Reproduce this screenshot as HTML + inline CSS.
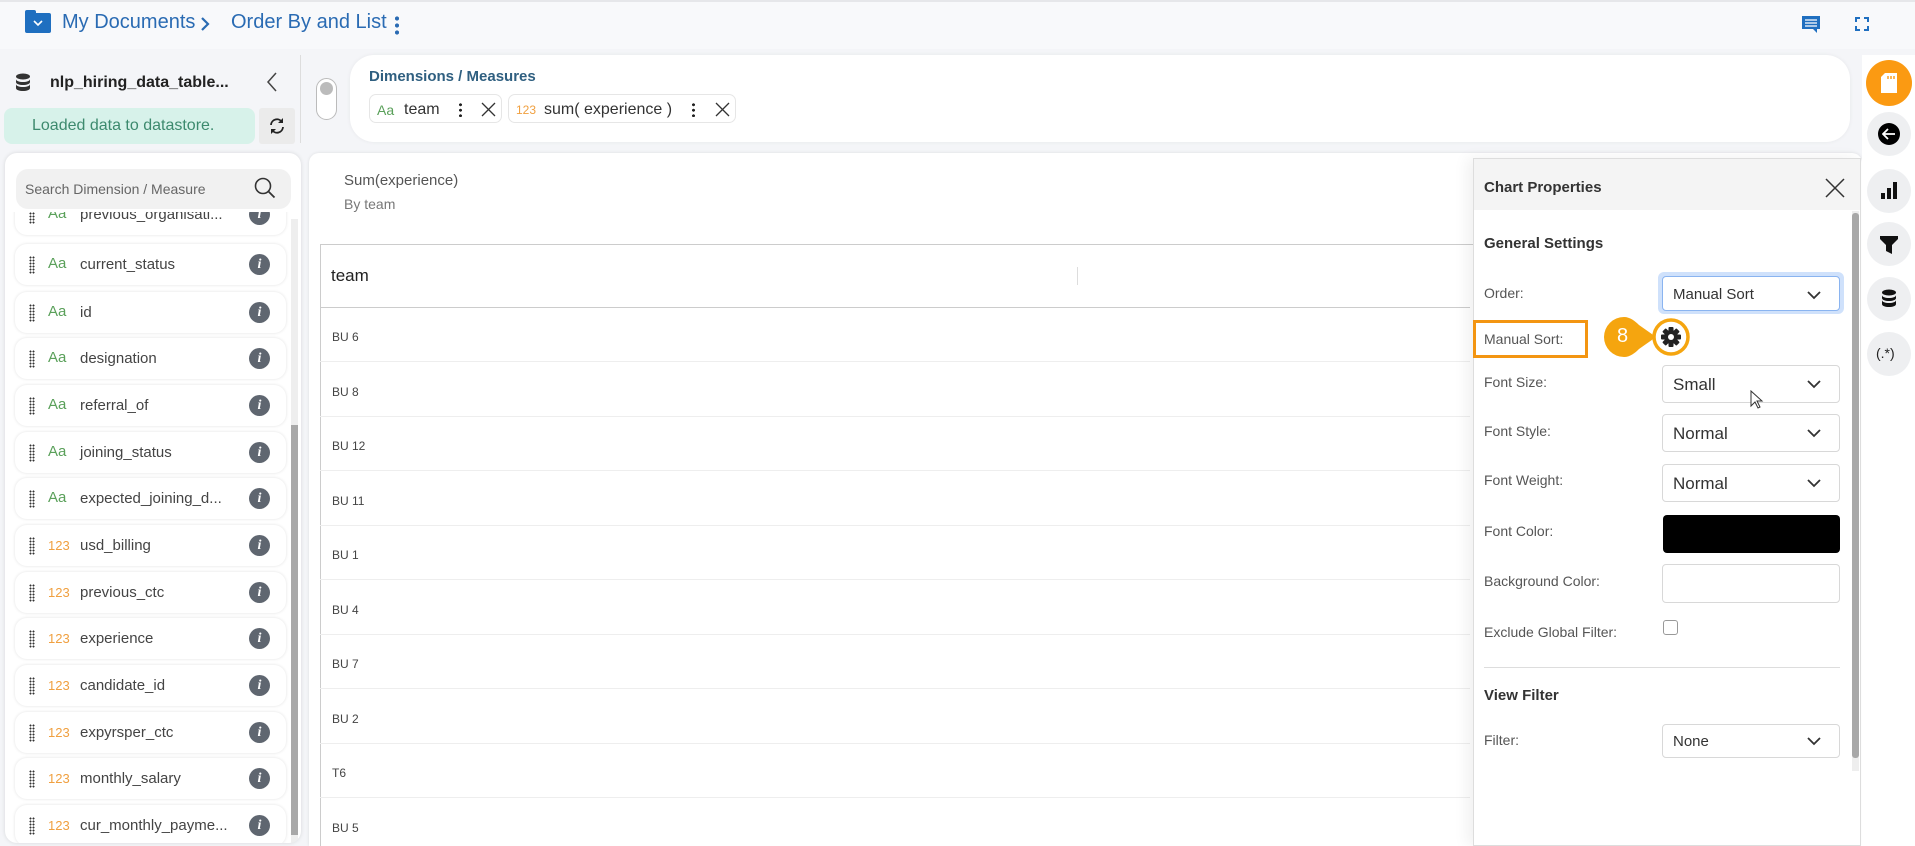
<!DOCTYPE html>
<html><head><meta charset="utf-8">
<style>
*{box-sizing:border-box;margin:0;padding:0}
html,body{width:1915px;height:846px;overflow:hidden}
body{background:#f4f5f8;font-family:"Liberation Sans",sans-serif;position:relative;color:#333}
.a{position:absolute}
.row{position:absolute;left:15px;width:271px;height:41px;background:#fff;border-radius:12px;box-shadow:0 0 3px rgba(0,0,0,.12)}
.row .g{position:absolute;left:14px;top:12px;width:6px;height:18px;background:radial-gradient(circle,#333 0.9px,transparent 1.1px) 0 0/3px 3px}
.row .t{position:absolute;left:33px;top:11px;font-size:15px;color:#5aa05a}
.row .t.n{color:#f0a040;font-size:13px;top:13px}
.row .l{position:absolute;left:65px;top:12px;font-size:15px;color:#444}
.row .i{position:absolute;left:234px;top:10px;width:21px;height:21px;border-radius:50%;background:#5f6670;color:#fff;font:italic bold 14px "Liberation Serif",serif;text-align:center;line-height:21px}
.tr{position:absolute;left:320px;width:1150px;height:54px;border-bottom:1px solid #eee;font-size:12px;color:#444;padding:22px 0 0 12px}
.lab{position:absolute;left:1484px;font-size:14px;color:#555}
.sel{position:absolute;left:1662px;width:178px;height:38px;border:1px solid #d8d8d8;border-radius:4px;background:#fff;font-size:17px;color:#333;padding:9px 0 0 10px}
.sel svg{position:absolute;right:18px;top:14px}
.sb{position:absolute;left:1867px;width:44px;height:44px;border-radius:50%;background:#eeeff1}
.dots{position:absolute;width:3px;height:15px;background:radial-gradient(circle,#222 1.4px,transparent 1.6px) 0 0/3px 5.5px}
</style></head><body>
<div class="a" style="left:0;top:0;width:1915px;height:49px;background:#f8f9fb;border-top:2px solid #e6e7ea"></div>
<div class="a" style="left:25px;top:13px;width:26px;height:20px;background:#1f6fc0;border-radius:2px"><div style="position:absolute;left:0;top:-3px;width:11px;height:5px;background:#1f6fc0;border-radius:2px 2px 0 0"></div><svg class="a" style="left:8px;top:6px" width="10" height="8"><path d="M1 2l4 4 4-4" stroke="#fff" stroke-width="1.6" fill="none"/></svg></div>
<div class="a" style="left:62px;top:11px;font-size:20px;color:#2a6bb3">My Documents</div>
<svg class="a" style="left:200px;top:17px" width="10" height="14"><path d="M2 1l6 6-6 6" stroke="#2a6bb3" stroke-width="2.2" fill="none"/></svg>
<div class="a" style="left:231px;top:11px;font-size:20px;color:#2a6bb3">Order By and List</div>
<div class="a" style="left:395px;top:15px;width:4px;height:20px;background:radial-gradient(circle,#2a6bb3 2px,transparent 2.2px) 0 0/4px 7px"></div>
<svg class="a" style="left:1801px;top:15px" width="20" height="19"><path d="M1 1h18v13h-3v4l-4-4H1z" fill="#1f6fc0"/><path d="M4 5h12M4 8h12M4 11h12" stroke="#fff" stroke-width="1.3"/></svg>
<svg class="a" style="left:1855px;top:17px" width="14" height="14"><path d="M1 5V1h4M9 1h4v4M13 9v4H9M5 13H1V9" stroke="#1f6fc0" stroke-width="2" fill="none"/></svg>
<svg class="a" style="left:15px;top:73px" width="16" height="20"><ellipse cx="8" cy="3.5" rx="7" ry="3" fill="#333"/><path d="M1 6c0 4 14 4 14 0v3c0 4-14 4-14 0zM1 11c0 4 14 4 14 0v4c0 4-14 4-14 0z" fill="#333"/></svg>
<div class="a" style="left:50px;top:74px;font-size:16px;font-weight:bold;color:#222">nlp_hiring_data_table...</div>
<svg class="a" style="left:266px;top:72px" width="12" height="20"><path d="M10 1L2 10l8 9" stroke="#444" stroke-width="1.5" fill="none"/></svg>
<div class="a" style="left:4px;top:108px;width:251px;height:36px;background:#d7f2ea;border-radius:8px;font-size:16px;color:#3d8a6e;padding:9px 0 0 28px">Loaded data to datastore.</div>
<div class="a" style="left:259px;top:108px;width:36px;height:36px;background:#ebebeb;border-radius:3px"><svg style="position:absolute;left:9px;top:9px" width="18" height="18"><path d="M3 8a6 6 0 0 1 11-3M15 10a6 6 0 0 1-11 3" stroke="#222" stroke-width="1.8" fill="none"/><path d="M15 1v5h-5zM3 17v-5h5z" fill="#222"/></svg></div>
<div class="a" style="left:300px;top:55px;width:1px;height:88px;background:#ddd"></div>
<div class="a" style="left:350px;top:55px;width:1500px;height:87px;background:#fff;border-radius:24px;box-shadow:0 0 4px rgba(0,0,0,.06)"></div>
<div class="a" style="left:316px;top:78px;width:21px;height:42px;border:1.5px solid #bbb;border-radius:11px;background:#fff"><div style="position:absolute;left:3px;top:3px;width:13px;height:13px;border-radius:50%;background:#bbb"></div></div>
<div class="a" style="left:369px;top:68px;font-size:15px;font-weight:bold;color:#2f5f80">Dimensions / Measures</div>
<div class="a" style="left:369px;top:94px;width:133px;height:29px;border:1px solid #e6e6e6;border-radius:7px;background:#fff">
<div class="a" style="left:7px;top:7px;font-size:14px;color:#5aa05a">Aa</div>
<div class="a" style="left:34px;top:6px;font-size:16px;color:#333">team</div>
<div class="dots" style="left:89px;top:7px"></div>
<svg class="a" style="left:111px;top:7px" width="15" height="15"><path d="M1 1l13 13M14 1L1 14" stroke="#333" stroke-width="1.3"/></svg></div>
<div class="a" style="left:508px;top:94px;width:228px;height:29px;border:1px solid #e6e6e6;border-radius:7px;background:#fff">
<div class="a" style="left:7px;top:8px;font-size:12px;color:#f0a040">123</div>
<div class="a" style="left:35px;top:6px;font-size:16px;color:#333">sum( experience )</div>
<div class="dots" style="left:183px;top:7px"></div>
<svg class="a" style="left:206px;top:7px" width="15" height="15"><path d="M1 1l13 13M14 1L1 14" stroke="#333" stroke-width="1.3"/></svg></div>
<div class="a" style="left:5px;top:153px;width:296px;height:690px;background:#fff;border-radius:12px;box-shadow:0 0 4px rgba(0,0,0,.12);overflow:hidden">
<div class="a" style="left:286px;top:66px;width:7px;height:624px;background:#eee"></div>
<div class="a" style="left:286px;top:272px;width:7px;height:410px;background:#a8a8a8"></div>
</div>
<div class="a" style="left:10px;top:212px;width:280px;height:631px;overflow:hidden">
<div style="position:absolute;left:-10px;top:-212px;width:300px;height:900px">
<div class="row" style="top:194px"><div class="g"></div><div class="t">Aa</div><div class="l">previous_organisati...</div><div class="i">i</div></div>
<div class="row" style="top:244px"><div class="g"></div><div class="t">Aa</div><div class="l">current_status</div><div class="i">i</div></div>
<div class="row" style="top:292px"><div class="g"></div><div class="t">Aa</div><div class="l">id</div><div class="i">i</div></div>
<div class="row" style="top:338px"><div class="g"></div><div class="t">Aa</div><div class="l">designation</div><div class="i">i</div></div>
<div class="row" style="top:385px"><div class="g"></div><div class="t">Aa</div><div class="l">referral_of</div><div class="i">i</div></div>
<div class="row" style="top:432px"><div class="g"></div><div class="t">Aa</div><div class="l">joining_status</div><div class="i">i</div></div>
<div class="row" style="top:478px"><div class="g"></div><div class="t">Aa</div><div class="l">expected_joining_d...</div><div class="i">i</div></div>
<div class="row" style="top:525px"><div class="g"></div><div class="t n">123</div><div class="l">usd_billing</div><div class="i">i</div></div>
<div class="row" style="top:572px"><div class="g"></div><div class="t n">123</div><div class="l">previous_ctc</div><div class="i">i</div></div>
<div class="row" style="top:618px"><div class="g"></div><div class="t n">123</div><div class="l">experience</div><div class="i">i</div></div>
<div class="row" style="top:665px"><div class="g"></div><div class="t n">123</div><div class="l">candidate_id</div><div class="i">i</div></div>
<div class="row" style="top:712px"><div class="g"></div><div class="t n">123</div><div class="l">expyrsper_ctc</div><div class="i">i</div></div>
<div class="row" style="top:758px"><div class="g"></div><div class="t n">123</div><div class="l">monthly_salary</div><div class="i">i</div></div>
<div class="row" style="top:805px"><div class="g"></div><div class="t n">123</div><div class="l">cur_monthly_payme...</div><div class="i">i</div></div>
</div></div>
<div class="a" style="left:16px;top:169px;width:275px;height:40px;background:#f1f1f1;border-radius:12px"><span class="a" style="left:9px;top:12px;font-size:14px;color:#666">Search Dimension / Measure</span><svg class="a" style="left:238px;top:8px" width="22" height="22"><circle cx="9" cy="9" r="7.5" stroke="#333" stroke-width="1.6" fill="none"/><path d="M14.5 14.5l6 6" stroke="#333" stroke-width="1.8"/></svg></div>
<div class="a" style="left:309px;top:153px;width:1553px;height:693px;background:#fff;border-radius:10px 10px 0 0;box-shadow:0 0 3px rgba(0,0,0,.1)"></div>
<div class="a" style="left:344px;top:172px;font-size:15px;color:#555">Sum(experience)</div>
<div class="a" style="left:344px;top:196px;font-size:14px;color:#777">By team</div>
<div class="a" style="left:320px;top:244px;width:1160px;height:602px;border:1px solid #ccc;border-right:none;border-bottom:none"></div>
<div class="a" style="left:320px;top:307px;width:1150px;height:1px;background:#ccc"></div>
<div class="a" style="left:331px;top:266px;font-size:17px;color:#222">team</div>
<div class="a" style="left:1077px;top:267px;width:1px;height:18px;background:#ddd"></div>
<div class="tr" style="top:308px">BU 6</div>
<div class="tr" style="top:363px">BU 8</div>
<div class="tr" style="top:417px">BU 12</div>
<div class="tr" style="top:472px">BU 11</div>
<div class="tr" style="top:526px">BU 1</div>
<div class="tr" style="top:581px">BU 4</div>
<div class="tr" style="top:635px">BU 7</div>
<div class="tr" style="top:690px">BU 2</div>
<div class="tr" style="top:744px">T6</div>
<div class="tr" style="top:799px;height:40px;border:none">BU 5</div>
<div class="a" style="left:1473px;top:158px;width:388px;height:688px;background:#fff;border:1px solid #ddd;box-shadow:-6px 0 14px rgba(0,0,0,.06)"></div>
<div class="a" style="left:1474px;top:159px;width:386px;height:51px;background:#f4f4f4"></div>
<div class="a" style="left:1484px;top:179px;font-size:15px;font-weight:bold;color:#333">Chart Properties</div>
<svg class="a" style="left:1825px;top:178px" width="20" height="20"><path d="M1 1l18 18M19 1L1 19" stroke="#333" stroke-width="1.5"/></svg>
<div class="a" style="left:1852px;top:211px;width:7px;height:560px;background:#eee"></div>
<div class="a" style="left:1852px;top:213px;width:7px;height:545px;background:#a8a8a8;border-radius:3px"></div>
<div class="a" style="left:1484px;top:235px;font-size:15px;font-weight:bold;color:#333">General Settings</div>
<div class="lab" style="top:285px">Order:</div>
<div class="a" style="left:1658px;top:272px;width:186px;height:42px;border-radius:6px;background:#cfe1fb"></div>
<div class="sel" style="top:276px;height:35px;border-color:#8ab4f0;font-size:15px">Manual Sort<svg width="14" height="9"><path d="M1 1l6 6 6-6" stroke="#333" stroke-width="1.8" fill="none"/></svg></div>
<div class="a" style="left:1473px;top:320px;width:115px;height:38px;border:3px solid #f39512"></div>
<div class="lab" style="top:331px">Manual Sort:</div>
<svg class="a" style="left:1600px;top:314px" width="95" height="46"><path d="M24 3a20 20 0 1 0 0 40c6 0 11-4 15-8l17-12-17-12c-4-4-9-8-15-8z" fill="#f5a50f"/><circle cx="71" cy="23" r="17" fill="#fff" stroke="#f5a50f" stroke-width="3.5"/><g transform="translate(71 23)" fill="#222"><circle r="7"/><rect x="-2.5" y="-10" width="5" height="20" rx="1"/><rect x="-2.5" y="-10" width="5" height="20" rx="1" transform="rotate(45)"/><rect x="-2.5" y="-10" width="5" height="20" rx="1" transform="rotate(90)"/><rect x="-2.5" y="-10" width="5" height="20" rx="1" transform="rotate(135)"/><circle r="3" fill="#fff"/></g></svg>
<div class="a" style="left:1617px;top:325px;font-size:20px;color:#fff">8</div>
<div class="lab" style="top:374px">Font Size:</div>
<div class="sel" style="top:365px">Small<svg width="14" height="9"><path d="M1 1l6 6 6-6" stroke="#333" stroke-width="1.8" fill="none"/></svg></div>
<svg class="a" style="left:1750px;top:390px" width="14" height="20"><path d="M1 1v15l4-4 3 6 2-1-3-6h5z" fill="#fff" stroke="#333" stroke-width="1"/></svg>
<div class="lab" style="top:423px">Font Style:</div>
<div class="sel" style="top:414px">Normal<svg width="14" height="9"><path d="M1 1l6 6 6-6" stroke="#333" stroke-width="1.8" fill="none"/></svg></div>
<div class="lab" style="top:472px">Font Weight:</div>
<div class="sel" style="top:464px">Normal<svg width="14" height="9"><path d="M1 1l6 6 6-6" stroke="#333" stroke-width="1.8" fill="none"/></svg></div>
<div class="lab" style="top:523px">Font Color:</div>
<div class="a" style="left:1663px;top:515px;width:177px;height:38px;background:#000;border-radius:4px"></div>
<div class="lab" style="top:573px">Background Color:</div>
<div class="sel" style="top:564px;height:39px"></div>
<div class="lab" style="top:624px">Exclude Global Filter:</div>
<div class="a" style="left:1663px;top:620px;width:15px;height:15px;border:1px solid #999;border-radius:3px;background:#fff"></div>
<div class="a" style="left:1484px;top:667px;width:356px;height:1px;background:#ddd"></div>
<div class="lab" style="top:687px;font-weight:bold;color:#333;font-size:15px">View Filter</div>
<div class="lab" style="top:732px">Filter:</div>
<div class="sel" style="top:724px;height:34px;font-size:15px;padding-top:8px">None<svg width="14" height="9" style="top:12px"><path d="M1 1l6 6 6-6" stroke="#333" stroke-width="1.8" fill="none"/></svg></div>
<div class="a" style="left:1862px;top:55px;width:53px;height:791px;background:#fff"></div>
<div class="a" style="left:1866px;top:60px;width:46px;height:46px;border-radius:50%;background:#fb9a12"><svg style="position:absolute;left:15px;top:13px" width="16" height="20"><path d="M4 0h12v20H0V4z" fill="#fff"/><path d="M7 3v3M10 3v3M13 3v3" stroke="#fb9a12" stroke-width="1.4"/></svg></div>
<div class="sb" style="top:112px"><div style="position:absolute;left:11px;top:11px;width:22px;height:22px;border-radius:50%;background:#000"></div><svg style="position:absolute;left:15px;top:16px" width="14" height="12"><path d="M13 6H2M6 1L1 6l5 5" stroke="#fff" stroke-width="1.8" fill="none"/></svg></div>
<div class="sb" style="top:169px"><svg style="position:absolute;left:14px;top:13px" width="17" height="18"><rect x="0" y="11" width="4" height="6" fill="#111"/><rect x="6" y="6" width="4" height="11" fill="#111"/><rect x="12" y="0" width="4" height="17" fill="#111"/></svg></div>
<div class="sb" style="top:222px"><svg style="position:absolute;left:13px;top:14px" width="18" height="18"><path d="M0 0h18v3l-6 6v9l-6-3V9L0 3z" fill="#111"/></svg></div>
<div class="sb" style="top:277px"><svg style="position:absolute;left:14px;top:12px" width="16" height="20"><ellipse cx="8" cy="3.5" rx="7" ry="3" fill="#111"/><path d="M1 6c0 4 14 4 14 0v3c0 4-14 4-14 0zM1 11c0 4 14 4 14 0v4c0 4-14 4-14 0z" fill="#111"/></svg></div>
<div class="sb" style="top:332px"><span style="position:absolute;left:9px;top:13px;font-size:14px;color:#222">(.*)</span></div>
</body></html>
